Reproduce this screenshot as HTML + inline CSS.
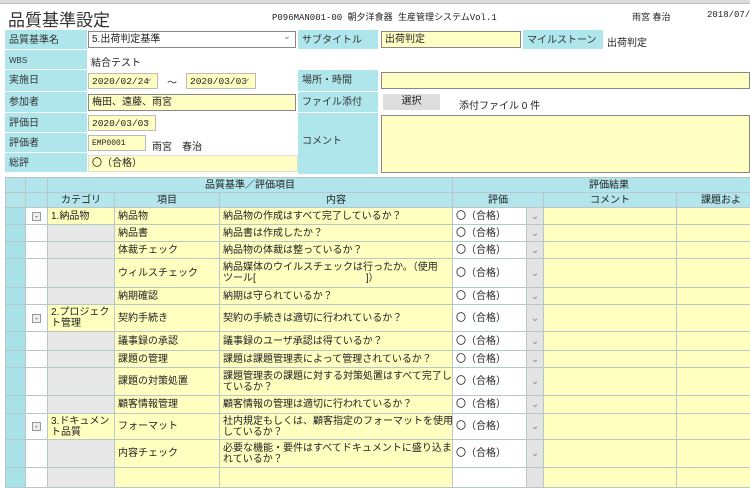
<!DOCTYPE html>
<html><head><meta charset="utf-8"><style>
*{box-sizing:border-box;margin:0;padding:0}
body{width:750px;height:472px;overflow:hidden;background:#fff;font-family:"Liberation Sans","Noto Sans CJK JP",sans-serif;font-size:10px;color:#222;position:relative}
.a{position:absolute;white-space:nowrap}
.lb{position:absolute;background:#aee6ec;border-bottom:1px solid #fff;padding-left:4px;line-height:21px;font-size:10px;color:#333}
.y{position:absolute;background:#ffffc4;border:1px solid #888;padding-left:3px;font-size:10px;line-height:15px}
.m{font-family:"Liberation Mono",monospace;font-size:9.5px}
.sel:after{content:"⌄";position:absolute;right:4px;top:-3px;color:#888}
table{position:absolute;left:5px;top:177px;border-collapse:collapse;table-layout:fixed;width:760px}
td{border:1px solid #b8c8c8;font-size:10px;line-height:11px;padding:0 3px;vertical-align:middle;overflow:hidden;white-space:nowrap}
.h td{background:#b2e6ec;text-align:center;height:15px}
.c0{background:#a8e2e8}
.c1{background:#fff;text-align:center}
.cg{background:#e8e8e8}
.yy{background:#ffffc0}
.ev{background:#fff}
.dd{background:#e4e4e4;color:#888;text-align:center;padding:0}
.bx{display:inline-block;width:9px;height:9px;border:1px solid #999;background:#eee;font-size:8px;line-height:7px}
</style></head><body>
<div class="a" style="left:0;top:0;width:750px;height:4px;background:#ddd;border-bottom:1px solid #bbb"></div>
<div class="a" style="left:8px;top:6px;font-size:17px;color:#333">品質基準設定</div>
<div class="a m" style="left:272px;top:10px;font-size:9px">P096MAN001-00 朝夕洋食器 生産管理システムVol.1</div>
<div class="a" style="left:632px;top:10px;font-size:9px">雨宮 春治</div>
<div class="a m" style="left:707px;top:10px;font-size:9px">2018/07/</div>

<div class="lb" style="left:5px;top:30px;width:82px;height:20px">品質基準名</div>
<div class="y sel" style="left:88px;top:31px;width:208px;height:17px;background:#fff">5.出荷判定基準</div>
<div class="lb" style="left:298px;top:30px;width:80px;height:20px">サブタイトル</div>
<div class="y" style="left:381px;top:31px;width:140px;height:17px">出荷判定</div>
<div class="lb" style="left:523px;top:30px;width:80px;height:20px">マイルストーン</div>
<div class="a" style="left:607px;top:34px">出荷判定</div>

<div class="lb" style="left:5px;top:50px;width:82px;height:20px;font-size:8px">WBS</div>
<div class="a" style="left:91px;top:54px">結合テスト</div>

<div class="lb" style="left:5px;top:70px;width:82px;height:22px;line-height:22px">実施日</div>
<div class="y sel m" style="left:88px;top:73px;width:70px;height:16px;border-color:#bbb">2020/02/24</div>
<div class="a" style="left:167px;top:74px">～</div>
<div class="y sel m" style="left:186px;top:73px;width:70px;height:16px;border-color:#bbb">2020/03/03</div>
<div class="lb" style="left:298px;top:70px;width:80px;height:22px;line-height:22px">場所・時間</div>
<div class="y" style="left:381px;top:72px;width:369px;height:17px"></div>

<div class="lb" style="left:5px;top:92px;width:82px;height:21px">参加者</div>
<div class="y" style="left:88px;top:94px;width:208px;height:17px">梅田、遠藤、雨宮</div>
<div class="lb" style="left:298px;top:92px;width:80px;height:21px">ファイル添付</div>
<div class="a" style="left:383px;top:94px;width:57px;height:16px;background:#ddd;text-align:center;line-height:16px">選択</div>
<div class="a" style="left:459px;top:97px">添付ファイル 0 件</div>

<div class="lb" style="left:5px;top:113px;width:82px;height:20px">評価日</div>
<div class="y sel m" style="left:88px;top:115px;width:68px;height:16px;border-color:#bbb">2020/03/03</div>
<div class="lb" style="left:298px;top:113px;width:80px;height:62px;line-height:58px">コメント</div>
<div class="y" style="left:381px;top:115px;width:369px;height:58px"></div>

<div class="lb" style="left:5px;top:133px;width:82px;height:20px">評価者</div>
<div class="y m" style="left:88px;top:135px;width:58px;height:16px;font-size:8px;border-color:#bbb">EMP0001</div>
<div class="a" style="left:152px;top:138px">雨宮　春治</div>

<div class="lb" style="left:5px;top:153px;width:82px;height:20px">総評</div>
<div class="y" style="left:88px;top:155px;width:210px;height:17px;border-color:#ddd">〇（合格）</div>

<table>
<colgroup><col style="width:20px"><col style="width:22px"><col style="width:67px"><col style="width:105px"><col style="width:233px"><col style="width:74px"><col style="width:17px"><col style="width:133px"><col style="width:89px"></colgroup>
<tr class="h"><td class="c0"></td><td class="c1"></td><td colspan="3">品質基準／評価項目</td><td colspan="4">評価結果</td></tr>
<tr class="h"><td class="c0"></td><td class="c1"></td><td>カテゴリ</td><td>項目</td><td>内容</td><td colspan="2">評価</td><td>コメント</td><td>課題およ</td></tr>
<tr style="height:17px"><td class="c0"></td><td class="c1"><span class="bx">-</span></td><td class="yy">1.納品物</td><td class="yy">納品物</td><td class="yy">納品物の作成はすべて完了しているか？</td><td class="ev">〇（合格）</td><td class="dd">⌄</td><td class="yy"></td><td class="yy"></td></tr>
<tr style="height:17px"><td class="c0"></td><td class="c1"></td><td class="cg"></td><td class="yy">納品書</td><td class="yy">納品書は作成したか？</td><td class="ev">〇（合格）</td><td class="dd">⌄</td><td class="yy"></td><td class="yy"></td></tr>
<tr style="height:17px"><td class="c0"></td><td class="c1"></td><td class="cg"></td><td class="yy">体裁チェック</td><td class="yy">納品物の体裁は整っているか？</td><td class="ev">〇（合格）</td><td class="dd">⌄</td><td class="yy"></td><td class="yy"></td></tr>
<tr style="height:29px"><td class="c0"></td><td class="c1"></td><td class="cg"></td><td class="yy">ウィルスチェック</td><td class="yy">納品媒体のウイルスチェックは行ったか。（使用<br>ツール[　　　　　　　　　　　]）</td><td class="ev">〇（合格）</td><td class="dd">⌄</td><td class="yy"></td><td class="yy"></td></tr>
<tr style="height:17px"><td class="c0"></td><td class="c1"></td><td class="cg"></td><td class="yy">納期確認</td><td class="yy">納期は守られているか？</td><td class="ev">〇（合格）</td><td class="dd">⌄</td><td class="yy"></td><td class="yy"></td></tr>
<tr style="height:27px"><td class="c0"></td><td class="c1"><span class="bx">-</span></td><td class="yy">2.プロジェク<br>ト管理</td><td class="yy">契約手続き</td><td class="yy">契約の手続きは適切に行われているか？</td><td class="ev">〇（合格）</td><td class="dd">⌄</td><td class="yy"></td><td class="yy"></td></tr>
<tr style="height:19px"><td class="c0"></td><td class="c1"></td><td class="cg"></td><td class="yy">議事録の承認</td><td class="yy">議事録のユーザ承認は得ているか？</td><td class="ev">〇（合格）</td><td class="dd">⌄</td><td class="yy"></td><td class="yy"></td></tr>
<tr style="height:17px"><td class="c0"></td><td class="c1"></td><td class="cg"></td><td class="yy">課題の管理</td><td class="yy">課題は課題管理表によって管理されているか？</td><td class="ev">〇（合格）</td><td class="dd">⌄</td><td class="yy"></td><td class="yy"></td></tr>
<tr style="height:28px"><td class="c0"></td><td class="c1"></td><td class="cg"></td><td class="yy">課題の対策処置</td><td class="yy">課題管理表の課題に対する対策処置はすべて完了し<br>ているか？</td><td class="ev">〇（合格）</td><td class="dd">⌄</td><td class="yy"></td><td class="yy"></td></tr>
<tr style="height:18px"><td class="c0"></td><td class="c1"></td><td class="cg"></td><td class="yy">顧客情報管理</td><td class="yy">顧客情報の管理は適切に行われているか？</td><td class="ev">〇（合格）</td><td class="dd">⌄</td><td class="yy"></td><td class="yy"></td></tr>
<tr style="height:26px"><td class="c0"></td><td class="c1"><span class="bx">-</span></td><td class="yy">3.ドキュメン<br>ト品質</td><td class="yy">フォーマット</td><td class="yy">社内規定もしくは、顧客指定のフォーマットを使用<br>しているか？</td><td class="ev">〇（合格）</td><td class="dd">⌄</td><td class="yy"></td><td class="yy"></td></tr>
<tr style="height:28px"><td class="c0"></td><td class="c1"></td><td class="cg"></td><td class="yy">内容チェック</td><td class="yy">必要な機能・要件はすべてドキュメントに盛り込ま<br>れているか？</td><td class="ev">〇（合格）</td><td class="dd">⌄</td><td class="yy"></td><td class="yy"></td></tr>
<tr style="height:20px"><td class="c0"></td><td class="c1"></td><td class="cg"></td><td class="yy"></td><td class="yy"></td><td class="ev"></td><td class="dd"></td><td class="yy"></td><td class="yy"></td></tr>
</table>
</body></html>
